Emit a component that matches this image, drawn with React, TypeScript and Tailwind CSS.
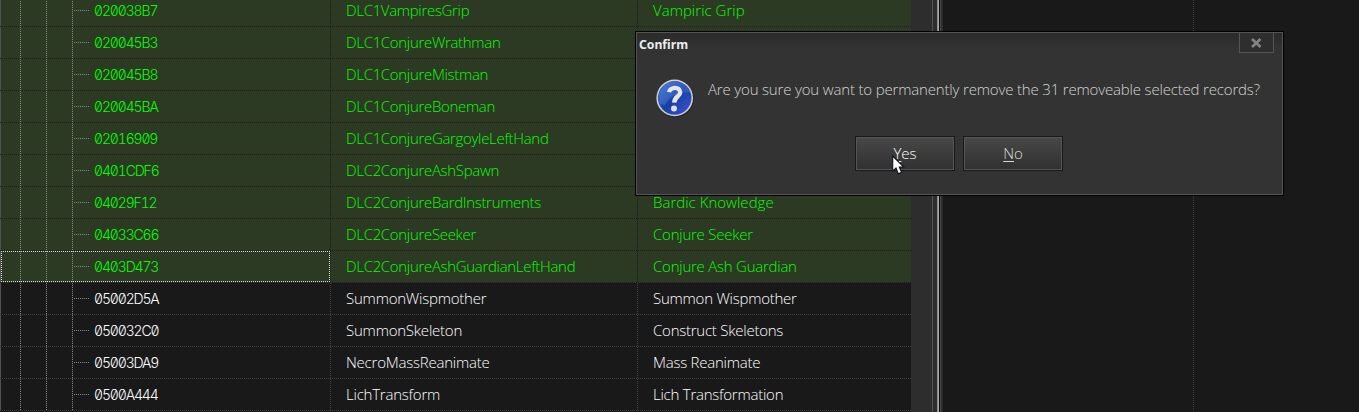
type Rec = { id: string; editor: string; name: string; removable: boolean; focused?: boolean; wide?: boolean };

const records: Rec[] = [
  { id: "020038B7", editor: "DLC1VampiresGrip", name: "Vampiric Grip", removable: true, wide: true },
  { id: "020045B3", editor: "DLC1ConjureWrathman", name: "", removable: true },
  { id: "020045B8", editor: "DLC1ConjureMistman", name: "", removable: true },
  { id: "020045BA", editor: "DLC1ConjureBoneman", name: "", removable: true },
  { id: "02016909", editor: "DLC1ConjureGargoyleLeftHand", name: "", removable: true },
  { id: "0401CDF6", editor: "DLC2ConjureAshSpawn", name: "", removable: true },
  { id: "04029F12", editor: "DLC2ConjureBardInstruments", name: "Bardic Knowledge", removable: true, wide: true },
  { id: "04033C66", editor: "DLC2ConjureSeeker", name: "Conjure Seeker", removable: true },
  { id: "0403D473", editor: "DLC2ConjureAshGuardianLeftHand", name: "Conjure Ash Guardian", removable: true, focused: true },
  { id: "05002D5A", editor: "SummonWispmother", name: "Summon Wispmother", removable: false },
  { id: "050032C0", editor: "SummonSkeleton", name: "Construct Skeletons", removable: false },
  { id: "05003DA9", editor: "NecroMassReanimate", name: "Mass Reanimate", removable: false },
  { id: "0500A444", editor: "LichTransform", name: "Lich Transformation", removable: false },
];

const vDots = "bg-[repeating-linear-gradient(180deg,#8a8a8a_0px,#8a8a8a_1px,transparent_1px,transparent_2px)]";
const hDots = "bg-[repeating-linear-gradient(90deg,#8a8a8a_0px,#8a8a8a_1px,transparent_1px,transparent_2px)]";

function Line({ dark, vertical }: { dark: boolean; vertical?: boolean }) {
  const tone = vertical
    ? dark
      ? "bg-[repeating-linear-gradient(180deg,#211a22_0px,#211a22_1px,transparent_1px,transparent_2px)]"
      : "bg-[repeating-linear-gradient(180deg,#414141_0px,#414141_1px,transparent_1px,transparent_2px)]"
    : dark
      ? "bg-[repeating-linear-gradient(90deg,#211a22_0px,#211a22_1px,transparent_1px,transparent_2px)]"
      : "bg-[repeating-linear-gradient(90deg,#414141_0px,#414141_1px,transparent_1px,transparent_2px)]";
  return <span className={`block shrink-0 ${vertical ? "w-px self-stretch" : "h-px w-full"} ${tone}`} />;
}

function FocusRect() {
  return (
    <svg className="pointer-events-none absolute top-0 left-0" width="330" height="32" shapeRendering="crispEdges">
      <path d="M1 .5H330M1 30.5H330M1.5 0V31M329.5 0V31" stroke="#e0e0e0" strokeDasharray="1 1" fill="none" />
    </svg>
  );
}

function Row({ rec }: { rec: Rec }) {
  return (
    <div
      className={`flex h-8 shrink-0 flex-col ${rec.removable ? "bg-[#2d3a23] text-[#00ff00]" : "bg-[#191919] text-white"}`}
    >
      <div className="relative flex h-[31px] items-stretch leading-[31px] whitespace-nowrap">
        <div className="flex w-[330px] shrink-0 items-stretch border-l border-[#505050]">
          <span className={`-mb-px ml-[19px] w-px ${vDots}`} />
          <span className={`-mb-px ml-[25px] w-px ${vDots}`} />
          <span className={`-mb-px ml-[25px] w-px ${vDots}`} />
          <span className={`mt-[15px] ml-px h-px w-4 ${hDots}`} />
          <span className="ml-1 font-['Inter',monospace] text-[14px] tracking-[-1.15px] [font-feature-settings:'tnum','zero']">{rec.id}</span>
        </div>
        <Line dark={rec.removable} vertical />
        <span className={`w-[306px] shrink-0 pl-[15px] ${rec.removable ? "tracking-[-0.32px]" : "tracking-[-0.22px]"}`}>
          {rec.editor}
        </span>
        <Line dark={rec.removable} vertical />
        <span className={`pl-[15px] ${rec.wide ? "tracking-[0.02px]" : "tracking-[-0.24px]"}`}>{rec.name}</span>
        {rec.focused && <FocusRect />}
      </div>
      <Line dark={rec.removable} />
    </div>
  );
}

function DialogButton({ hotkey, rest, active }: { hotkey: string; rest: string; active?: boolean }) {
  return (
    <button
      className={`h-[35px] w-[100px] border border-[#191919] bg-linear-to-b from-[#484848] to-[#303030] inset-ring inset-ring-[#555555] ${active ? "text-white" : "text-[#d8d8d8]"}`}
    >
      <span className="underline decoration-1 underline-offset-2">{hotkey}</span>
      {rest}
    </button>
  );
}

function QuestionIcon() {
  return (
    <svg className="shrink-0" width="40" height="40" viewBox="0 0 40 40">
      <defs>
        <linearGradient id="orb" x1="0" y1="0" x2="1" y2="1">
          <stop offset="0" stopColor="#4878d4" />
          <stop offset=".5" stopColor="#1740a4" />
          <stop offset="1" stopColor="#4054d8" />
        </linearGradient>
      </defs>
      <circle cx="19.7" cy="21.2" r="18.2" fill="#1c1c1c" opacity=".5" />
      <circle cx="18.7" cy="19.9" r="18.3" fill="#d2d2ce" />
      <circle cx="18.7" cy="19.9" r="16.8" fill="url(#orb)" />
      <path d="M3 22C3 8 13 3 20 3.5C27 4 33 9 34 14C24 14 14 17 9 27L4 26Z" fill="#5b8ae0" opacity=".35" />
      <path d="M13 14.2C14 8.7 24.2 8.2 24.2 14.4C24.2 18.2 18.4 18.6 18.2 24.6" stroke="#e5e5e5" strokeWidth="4.4" fill="none" />
      <circle cx="18" cy="30.4" r="3" fill="#dedede" />
    </svg>
  );
}

function Cursor() {
  return (
    <svg className="absolute top-[123px] left-[256px]" width="13" height="20" viewBox="0 0 13 20">
      <path d="M.7 1V16.2L4 13L6.3 18.7L9.6 17.3L7.3 12H11.8Z" fill="white" stroke="#10101c" strokeWidth="1.1" />
    </svg>
  );
}

function ConfirmDialog() {
  return (
    <div className="absolute top-[31px] left-[635px] flex h-[165px] w-[649px] flex-col border border-black bg-linear-to-b from-[#2a2a2a] to-[#333333] to-10% inset-ring inset-ring-[#555555]">
      <div className="flex h-[22px] justify-between pr-[9px] pl-[3px]">
        <span className="pt-[3px] font-['Noto_Sans',sans-serif] text-[12.2px] leading-5 font-bold text-[#ececec]">Confirm</span>
        <button className="mt-px flex h-5 w-[35px] items-center justify-center border border-t-0 border-[#555555] bg-[#2e2e2e]">
          <svg width="12" height="10" viewBox="0 0 12 10">
            <path d="M1 1L9.5 9M9.5 1L1 9" stroke="#848484" strokeWidth="2.6" />
          </svg>
        </button>
      </div>
      <div className="mt-[24px] flex pl-5">
        <QuestionIcon />
        <p className="ml-3 leading-[22px] tracking-[-0.17px] whitespace-nowrap text-[#d4d4d4]">
          Are you sure you want to permanently remove the 31 removeable selected records?
        </p>
      </div>
      <div className="mt-[18px] flex gap-2 pl-[219px]">
        <DialogButton hotkey="Y" rest="es" active />
        <DialogButton hotkey="N" rest="o" />
      </div>
      <Cursor />
    </div>
  );
}

export default function App() {
  return (
    <div className="relative flex h-[412px] w-[1359px] overflow-hidden bg-[#191919] font-['Open_Sans',sans-serif] text-[15px] font-light">
      <main className="flex w-[911px] shrink-0 flex-col">
        <div className="-mt-[5px] flex flex-col">
          {records.map((r) => (
            <Row key={r.id} rec={r} />
          ))}
        </div>
      </main>
      <div className="flex w-[32px] shrink-0 bg-[#2d2d2d]">
        <span className="ml-[21px] w-px bg-[#555555]" />
        <span className="ml-1 w-px bg-[#8c8c8c]" />
        <span className="w-px bg-[#a8a8a8]" />
        <span className="w-px bg-[#111111]" />
        <span className="w-px bg-[#444444]" />
      </div>
      <aside className="flex flex-1">
        <div className="w-[250px]" />
        <Line dark={false} vertical />
      </aside>
      <ConfirmDialog />
    </div>
  );
}
